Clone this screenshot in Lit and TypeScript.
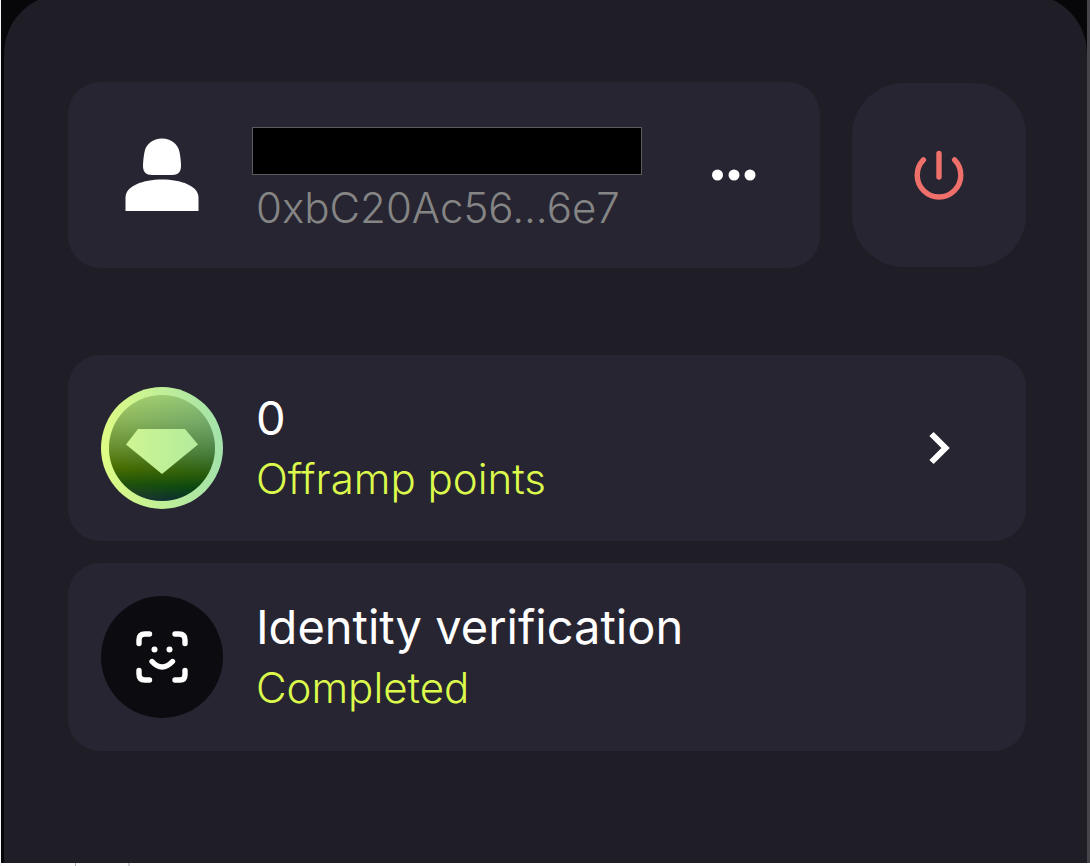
import { LitElement, html, css } from "lit";
import { customElement } from "lit/decorators.js";

@customElement("app-root")
export class AppRoot extends LitElement {
  static styles = css`
    :host {
      display: block;
      font-family: Inter, "Liberation Sans", sans-serif;
      color: #ffffff;
    }
    .shell {
      box-sizing: border-box;
      min-height: 100vh;
      display: flex;
      flex-direction: column;
      overflow: hidden;
      background: #07070a;
      border-left: 1px solid #f4f4f6;
    }
    .frame {
      flex: 1;
      display: flex;
      padding-left: 3px;
      border-right: 3px solid #464549;
    }
    .panel {
      flex: 1;
      min-width: 0;
      margin-top: -6px;
      padding: 88px 61px 64px 64px;
      border-radius: 60px 60px 0 0;
      background: #1f1d26;
    }
    .under {
      display: flex;
      height: 3px;
      background: #ffffff;
    }
    .cell {
      width: 74px;
      border-right: 1px solid #b8b8bc;
    }
    .cell.narrow {
      width: 52px;
      border-right: 2px solid #d8d8dc;
    }
    .top {
      display: flex;
      align-items: center;
      gap: 32px;
      margin-bottom: 87px;
    }
    .card {
      box-sizing: border-box;
      display: flex;
      align-items: center;
      gap: 33px;
      width: 100%;
      min-height: 186px;
      padding: 32px 32px 32px 33px;
      border: 0;
      border-radius: 32px;
      background: #272531;
      color: inherit;
      font: inherit;
      text-align: left;
    }
    .card.account {
      flex: 1;
      min-width: 0;
      gap: 29px;
      padding-top: 28px;
      padding-bottom: 28px;
    }
    .list {
      display: flex;
      flex-direction: column;
      gap: 22px;
    }
    .card.tall {
      min-height: 188px;
    }
    .icon {
      display: block;
      flex: none;
    }
    .text {
      flex: 1;
      min-width: 0;
      display: flex;
      flex-direction: column;
    }
    .title {
      font-size: 47px;
      line-height: 62px;
      font-weight: 400;
      margin: 0;
    }
    .sub {
      font-size: 42px;
      line-height: 60px;
      font-weight: 300;
      color: #dcfa4c;
      margin: 0;
    }
    .address {
      color: #858585;
      padding-left: 4px;
    }
    .hidden-name {
      box-sizing: border-box;
      width: 390px;
      max-width: 100%;
      height: 48px;
      margin: 15px 0 3px;
      background: #000000;
      border: 1px solid #5c5c5c;
    }
    .plain,
    .power {
      display: flex;
      align-items: center;
      justify-content: center;
      border: 0;
      padding: 0;
      background: none;
      cursor: pointer;
    }
    .plain {
      padding: 24px 31px;
    }
    .power {
      width: 174px;
      height: 184px;
      border-radius: 52px;
      background: #272531;
    }
    .card.points {
      padding-right: 74px;
      cursor: pointer;
    }
  `;

  render() {
    return html`
      <div class="shell">
        <div class="frame">
          <main class="panel">
            <div class="top">
              <section class="card account" aria-label="Account">
                <svg class="icon" width="122" height="122" viewBox="0 0 122 122" aria-hidden="true">
                  <path
                    fill="#fff"
                    d="M61 24.500C70 24.500 77 30 78.500 38C79.500 43 80 48 80 52C80 58 77 61 71 61H51C45 61 42 58 42 52C42 48 42.500 43 43.500 38C45 30 52 24.500 61 24.500Z"
                  />
                  <path
                    fill="#fff"
                    d="M24.500 97V83.500C24.500 72 42 65.500 61 65.500C80 65.500 97.500 72 97.500 83.500V97Z"
                  />
                </svg>
                <div class="text">
                  <div class="hidden-name"></div>
                  <p class="sub address">0xbC20Ac56...6e7</p>
                </div>
                <button class="plain" aria-label="More options">
                  <svg class="icon" width="46" height="12" viewBox="0 0 46 12" fill="#fff">
                    <circle cx="6.500" cy="6" r="5.500" />
                    <circle cx="23" cy="6" r="5.500" />
                    <circle cx="39" cy="6" r="5.500" />
                  </svg>
                </button>
              </section>
              <button class="power" aria-label="Disconnect">
                <svg
                  class="icon"
                  width="52"
                  height="52"
                  viewBox="0 0 52 52"
                  fill="none"
                  stroke="#ef6f6b"
                  stroke-width="5.400"
                  stroke-linecap="round"
                >
                  <path d="M26 4.500V28" />
                  <path d="M10.400 10.900A21.800 21.800 0 1 0 41.600 10.900" />
                </svg>
              </button>
            </div>

            <div class="list">
              <button class="card points">
                <svg class="icon" width="122" height="122" viewBox="0 0 122 122" aria-hidden="true">
                  <defs>
                    <linearGradient id="ring" x1="0" y1="0" x2="1" y2="0">
                      <stop offset="0" stop-color="#dffc84" />
                      <stop offset="1" stop-color="#a2e2ab" />
                    </linearGradient>
                    <linearGradient id="gem" gradientUnits="userSpaceOnUse" x1="0" y1="0" x2="122" y2="0">
                      <stop offset="0.200" stop-color="#cff592" />
                      <stop offset="0.800" stop-color="#b3eb9c" />
                    </linearGradient>
                    <linearGradient id="fill" x1="0.540" y1="0" x2="0.460" y2="1">
                      <stop offset="0" stop-color="#c6f39a" />
                      <stop offset="0.250" stop-color="#9cca82" />
                      <stop offset="0.500" stop-color="#68964c" />
                      <stop offset="0.720" stop-color="#355f00" />
                      <stop offset="0.850" stop-color="#033f0a" />
                      <stop offset="1" stop-color="#001540" />
                    </linearGradient>
                    <linearGradient id="shade" x1="0" y1="0" x2="1" y2="0">
                      <stop offset="0" stop-color="#7c9400" stop-opacity="0.300" />
                      <stop offset="1" stop-color="#004a28" stop-opacity="0.300" />
                    </linearGradient>
                  </defs>
                  <circle cx="61" cy="61" r="61" fill="url(#ring)" />
                  <circle cx="61" cy="61" r="53" fill="url(#fill)" />
                  <circle cx="61" cy="61" r="53" fill="url(#shade)" />
                  <path fill="url(#gem)" d="M37 42H84L97 57.500L61 87L25 57.500Z" />
                </svg>
                <span class="text">
                  <span class="title">0</span>
                  <span class="sub">Offramp points</span>
                </span>
                <svg
                  class="icon"
                  width="24"
                  height="36"
                  viewBox="0 0 24 36"
                  fill="none"
                  stroke="#fff"
                  stroke-width="6"
                  aria-hidden="true"
                >
                  <path d="M3.500 4L17.500 18L3.500 32" />
                </svg>
              </button>

              <section class="card tall">
                <svg class="icon" width="122" height="122" viewBox="0 0 122 122" aria-hidden="true">
                  <circle cx="61" cy="61" r="61" fill="#0c0b10" />
                  <g fill="none" stroke="#fff" stroke-width="5.400" stroke-linecap="round">
                    <path d="M38 47.500V44Q38 38 44 38H48.500" />
                    <path d="M74 38H78Q84 38 84 44V47.500" />
                    <path d="M38 74.500V78Q38 84 44 84H48.500" />
                    <path d="M84 74.500V79Q84 84 79 84H74" />
                    <path d="M51 65.500Q61 76.500 71.500 65.500" />
                  </g>
                  <circle cx="53.500" cy="53.500" r="3" fill="#fff" />
                  <circle cx="68.500" cy="53.500" r="3" fill="#fff" />
                </svg>
                <div class="text">
                  <h2 class="title">Identity verification</h2>
                  <p class="sub">Completed</p>
                </div>
              </section>
            </div>
          </main>
        </div>
        <div class="under">
          <span class="cell"></span>
          <span class="cell narrow"></span>
        </div>
      </div>
    `;
  }
}
